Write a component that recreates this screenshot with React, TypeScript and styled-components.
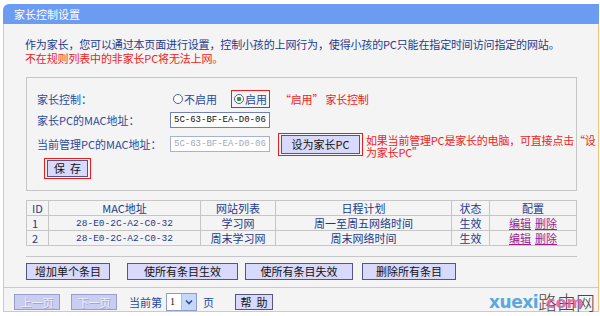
import { FC } from 'react';
import styled, { createGlobalStyle } from 'styled-components';

const BLUE_TEXT = '#1c3a8c';
const RED = '#ee1c1c';
const ORANGE = '#f6c27c';
const GREY_LINE = '#c6c6c6';
const PANEL_BG = '#f4f4f4';

const GlobalStyle = createGlobalStyle`
  html, body {
    margin: 0;
    padding: 0;
    background: #ffffff;
  }
  body {
    font-family: "SimSun", "Noto Sans CJK SC", sans-serif;
    font-size: 11px;
    line-height: 14px;
    color: ${BLUE_TEXT};
  }
`;

const SPage = styled.div`
  width: 600px;
  height: 316px;
  box-sizing: border-box;
  padding: 4px 1px 0 3px;
  position: relative;
  overflow: hidden;
`;
const STitleBar = styled.div`
  height: 20px;
  line-height: 20px;
  padding-left: 11px;
  background: #6b9cf2;
  border-top-left-radius: 6px;
  color: #ffffff;
  font-size: 11px;
`;
const SPanel = styled.div`
  border: 1px solid ${ORANGE};
  border-top: none;
  background: ${PANEL_BG};
`;
const SIntro = styled.div`
  padding: 13px 0 0 21px;
  line-height: 14px;
  letter-spacing: -0.15px;
`;
const SRedLine = styled.div`
  color: ${RED};
`;
const SFormBox = styled.div`
  margin: 12px 21px 0 22px;
  border: 1px solid ${GREY_LINE};
  padding: 11px 0 11px 10px;
  display: flex;
  flex-direction: column;
`;
const SRow = styled.div<{ h: number }>`
  display: flex;
  align-items: center;
  height: ${({ h }) => h}px;
`;
const SLabel = styled.div`
  width: 133px;
  flex-shrink: 0;
  color: #2a4a9e;
`;
const SRadio = styled.span<{ checked?: boolean }>`
  display: inline-flex;
  align-items: center;
  gap: 1px;
  flex-shrink: 0;
  color: #2a4a9e;
  &::before {
    content: '';
    width: 8px;
    height: 8px;
    border-radius: 50%;
    border: 1px solid #51618f;
    background: ${({ checked }) =>
      checked
        ? 'radial-gradient(circle, #2f9a36 0 2px, #ffffff 2.5px)'
        : '#ffffff'};
  }
`;
const SRedBox = styled.div`
  display: inline-flex;
  align-items: center;
  flex-shrink: 0;
  border: 1px solid ${RED};
  padding: 1px 2px;
`;
const SNote = styled.span<{ w?: number }>`
  color: ${RED};
  flex-shrink: 0;
  line-height: 12px;
  letter-spacing: -0.2px;
  ${({ w }) => (w ? `width: ${w}px;` : '')}
`;
const SInput = styled.input`
  width: 100px;
  height: 16px;
  box-sizing: border-box;
  flex-shrink: 0;
  margin: 0;
  padding: 0 0 0 3px;
  border: 1px solid #6f7fbf;
  background: #ffffff;
  font-family: "Liberation Mono", monospace;
  font-size: 9px;
  color: #111111;
  &:disabled {
    border-color: #a9b0d6;
    color: #a4a8ba;
  }
`;
const SButton = styled.button<{ w: number; h?: number }>`
  width: ${({ w }) => w}px;
  height: ${({ h }) => h ?? 17}px;
  flex-shrink: 0;
  margin: 0;
  padding: 0;
  box-sizing: border-box;
  background: #d9d9fb;
  border: 1px solid #56567a;
  font-family: "SimSun", "Noto Sans CJK SC", sans-serif;
  font-size: 11px;
  line-height: 13px;
  white-space: pre;
  color: #111111;
  &:disabled {
    background: #c9cdf1;
    border-color: #9a9ccc;
    color: #eef0ff;
    text-shadow: 1px 1px 0 #a2a6cc;
  }
`;
const STable = styled.table`
  margin: 9px 21px 0 22px;
  width: 550px;
  border-collapse: collapse;
  table-layout: fixed;
  td,
  th {
    border: 1px solid ${GREY_LINE};
    height: 14px;
    padding: 0;
    font-weight: normal;
    text-align: center;
    vertical-align: middle;
    line-height: 13px;
    white-space: nowrap;
    color: ${BLUE_TEXT};
  }
  td:first-child,
  th:first-child {
    text-align: left;
    padding-left: 5px;
  }
`;
const SMono = styled.span`
  display: inline-block;
  vertical-align: top;
  line-height: 13px;
  font-family: "Liberation Mono", monospace;
  font-size: 9.5px;
`;
const SLink = styled.a`
  display: inline-block;
  vertical-align: top;
  line-height: 13px;
  color: #9b1f8f;
  text-decoration: underline;
  margin: 0 2px;
`;
const SRule = styled.div`
  margin: 10px 21px 0 22px;
  border-top: 1px solid ${GREY_LINE};
`;
const SActions = styled.div`
  display: flex;
  margin: 6px 0 0 22px;
`;
const SFooter = styled.div`
  margin-top: 7px;
  border-top: 1px solid ${ORANGE};
  height: 24px;
  padding: 6px 0 0 10px;
  box-sizing: border-box;
  display: flex;
  align-items: flex-start;
  position: relative;
`;
const SPageText = styled.span<{ ml: number }>`
  margin-left: ${({ ml }) => ml}px;
  line-height: 16px;
  color: #2546a6;
`;
const SSelect = styled.div`
  margin: -1px 0 0 4px;
  width: 31px;
  height: 18px;
  box-sizing: border-box;
  border: 1px solid #8e9cc8;
  background: #ffffff;
  display: flex;
  align-items: stretch;
  color: #111;
  font-family: "Liberation Serif", serif;
  font-size: 10px;
`;
const SSelectValue = styled.span`
  flex: 1;
  padding-left: 3px;
  line-height: 15px;
`;
const SSelectArrow = styled.span`
  width: 14px;
  background: #c6d8f8;
  border-left: 1px solid #aebde6;
  display: flex;
  align-items: center;
  justify-content: center;
`;
const SWatermark = styled.div`
  position: absolute;
  right: 3px;
  bottom: -2px;
  display: flex;
  align-items: flex-end;
  line-height: 22px;
`;
const SWmLatin = styled.span`
  font-family: "DejaVu Sans", sans-serif;
  font-weight: bold;
  font-size: 17px;
  color: #5aa9dd;
  letter-spacing: -0.5px;
`;
const SWmCjk = styled.span`
  position: relative;
  font-family: "Noto Sans CJK SC", sans-serif;
  font-weight: 300;
  font-size: 19px;
  color: #4a4a4a;
`;
const SWmCom = styled.span`
  position: absolute;
  left: 8px;
  bottom: -1px;
  font-family: "DejaVu Sans", sans-serif;
  font-weight: bold;
  font-size: 16px;
  color: #e9589d;
  opacity: 0.85;
`;

interface IRule {
  id: number;
  mac: string;
  site: string;
  schedule: string;
  status: string;
}

const RULES: IRule[] = [
  { id: 1, mac: '28-E0-2C-A2-C0-32', site: '学习网', schedule: '周一至周五网络时间', status: '生效' },
  { id: 2, mac: '28-E0-2C-A2-C0-32', site: '周末学习网', schedule: '周末网络时间', status: '生效' },
];

const MAC = '5C-63-BF-EA-D0-06';

const App: FC = () => {
  return (
    <>
      <GlobalStyle />
      <SPage>
        <STitleBar>家长控制设置</STitleBar>
        <SPanel>
          <SIntro>
            <div>
              作为家长，您可以通过本页面进行设置，控制小孩的上网行为，使得小孩的PC只能在指定时间访问指定的网站。
            </div>
            <SRedLine>不在规则列表中的非家长PC将无法上网。</SRedLine>
          </SIntro>

          <SFormBox>
            <SRow h={20}>
              <SLabel>家长控制：</SLabel>
              <SRadio style={{ marginLeft: 3 }}>不启用</SRadio>
              <SRedBox style={{ marginLeft: 14 }}>
                <SRadio checked>启用</SRadio>
              </SRedBox>
              <SNote style={{ marginLeft: 10 }}>“启用” 家长控制</SNote>
            </SRow>
            <SRow h={22}>
              <SLabel>家长PC的MAC地址：</SLabel>
              <SInput readOnly value={MAC} />
            </SRow>
            <SRow h={26}>
              <SLabel>当前管理PC的MAC地址：</SLabel>
              <SInput disabled value={MAC} />
              <SRedBox style={{ marginLeft: 8 }}>
                <SButton w={79} h={19}>设为家长PC</SButton>
              </SRedBox>
              <SNote w={236} style={{ marginLeft: 3, marginTop: 4 }}>
                如果当前管理PC是家长的电脑，可直接点击“设为家长PC”
              </SNote>
            </SRow>
            <SRow h={22}>
              <SRedBox style={{ marginLeft: 7 }}>
                <SButton w={41}>保  存</SButton>
              </SRedBox>
            </SRow>
          </SFormBox>

          <STable>
            <colgroup>
              <col style={{ width: 22 }} />
              <col style={{ width: 152 }} />
              <col style={{ width: 75 }} />
              <col style={{ width: 176 }} />
              <col style={{ width: 38 }} />
              <col style={{ width: 87 }} />
            </colgroup>
            <thead>
              <tr>
                <th>ID</th>
                <th>MAC地址</th>
                <th>网站列表</th>
                <th>日程计划</th>
                <th>状态</th>
                <th>配置</th>
              </tr>
            </thead>
            <tbody>
              {RULES.map((r) => (
                <tr key={r.id}>
                  <td>{r.id}</td>
                  <td>
                    <SMono>{r.mac}</SMono>
                  </td>
                  <td>{r.site}</td>
                  <td>{r.schedule}</td>
                  <td>{r.status}</td>
                  <td>
                    <SLink>编辑</SLink>
                    <SLink>删除</SLink>
                  </td>
                </tr>
              ))}
            </tbody>
          </STable>

          <SRule />

          <SActions>
            <SButton w={84}>增加单个条目</SButton>
            <SButton w={111} style={{ marginLeft: 17 }}>使所有条目生效</SButton>
            <SButton w={108} style={{ marginLeft: 7 }}>使所有条目失效</SButton>
            <SButton w={94} style={{ marginLeft: 9 }}>删除所有条目</SButton>
          </SActions>

          <SFooter>
            <SButton w={46} h={16} disabled>上一页</SButton>
            <SButton w={46} h={16} disabled style={{ marginLeft: 11 }}>下一页</SButton>
            <SPageText ml={12}>当前第</SPageText>
            <SSelect>
              <SSelectValue>1</SSelectValue>
              <SSelectArrow>
                <svg width="8" height="6" viewBox="0 0 8 6">
                  <path d="M1 1.5 L4 4.5 L7 1.5" fill="none" stroke="#2b4c9a" strokeWidth="1.6" />
                </svg>
              </SSelectArrow>
            </SSelect>
            <SPageText ml={6}>页</SPageText>
            <SButton w={38} h={16} style={{ marginLeft: 21 }}>帮  助</SButton>
            <SWatermark>
              <SWmLatin>xuexi</SWmLatin>
              <SWmCjk>
                路由网
                <SWmCom>com</SWmCom>
              </SWmCjk>
            </SWatermark>
          </SFooter>
        </SPanel>
      </SPage>
    </>
  );
};

export default App;
